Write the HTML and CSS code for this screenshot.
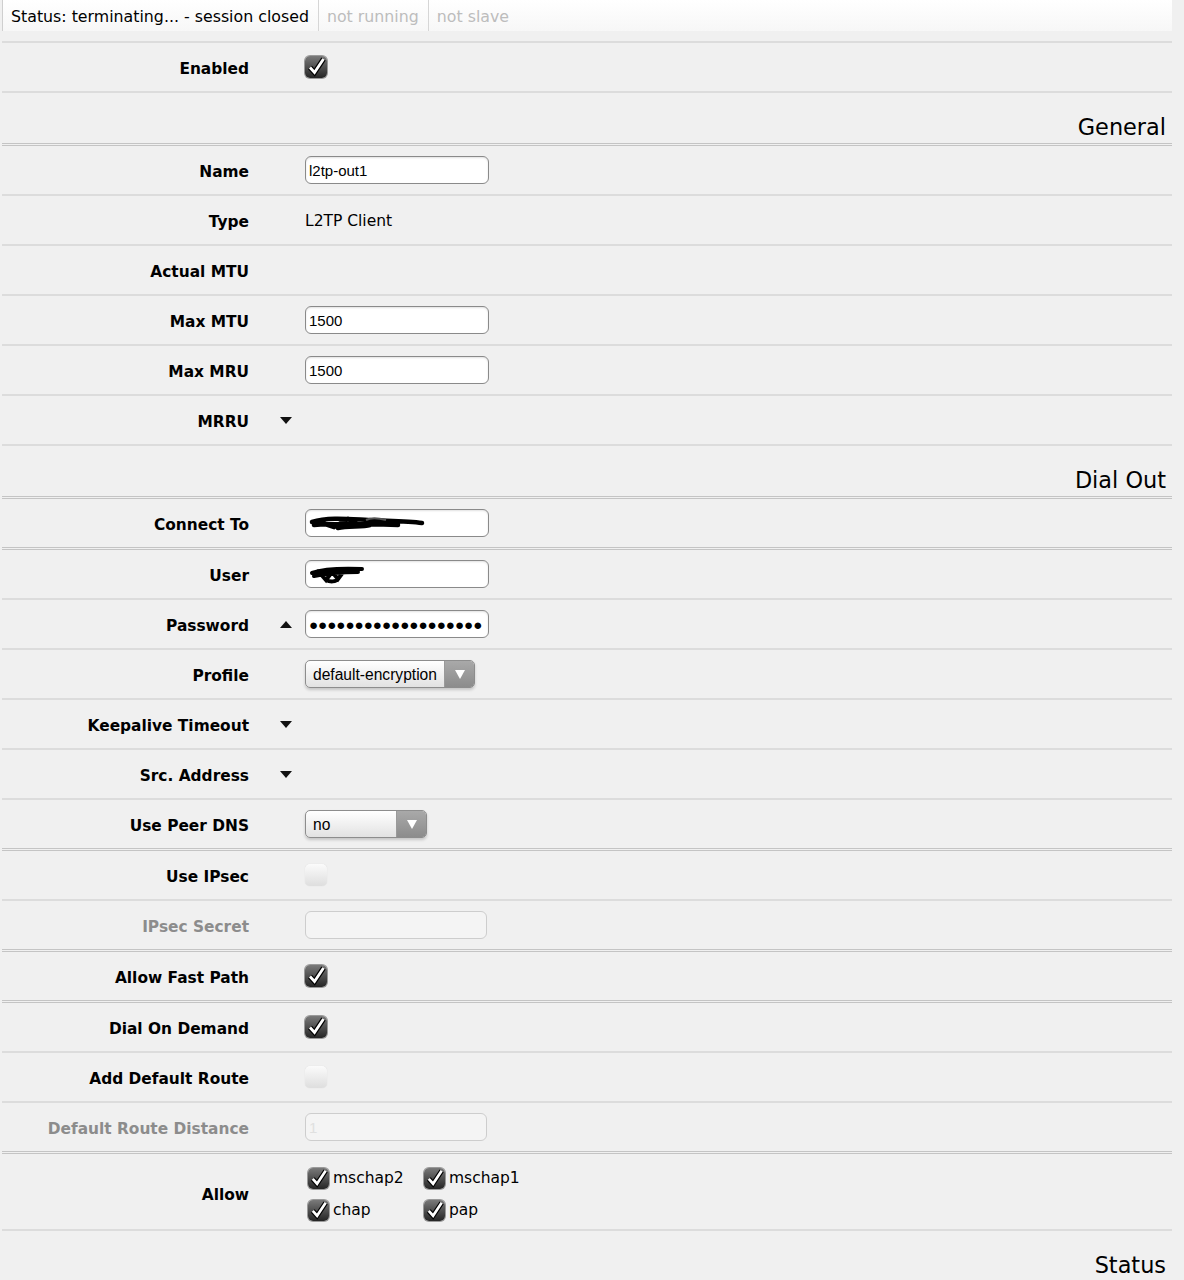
FILE: index.html
```html
<!DOCTYPE html>
<html lang="en">
<head>
  <meta charset="UTF-8" />
  <title>Interface &lt;l2tp-out1&gt;</title>
  <link rel="stylesheet" href="styles.css">
</head>
<body>
  <div class="page">

    <div class="status-bar">
      <div class="status-cell">Status: terminating... - session closed</div>
      <div class="status-cell off">not running</div>
      <div class="status-cell off">not slave</div>
    </div>
    <div class="spacer"></div>

    <div class="row">
      <div class="label">Enabled</div>
      <div class="toggle"></div>
      <div class="value">
        <span class="check on"><svg class="tick" viewBox="0 0 22 22"><path class="tick-edge" d="M5 11.5 L9.5 16.5 L18.5 3"/><path class="tick-mark" d="M5 11.5 L9.5 16.5 L18.5 3"/></svg></span>
      </div>
    </div>

    <div class="section">General</div>

    <div class="row">
      <div class="label">Name</div>
      <div class="toggle"></div>
      <div class="value"><input class="text" type="text" value="l2tp-out1"></div>
    </div>
    <div class="row">
      <div class="label">Type</div>
      <div class="toggle"></div>
      <div class="value plain">L2TP Client</div>
    </div>
    <div class="row">
      <div class="label">Actual MTU</div>
      <div class="toggle"></div>
      <div class="value"></div>
    </div>
    <div class="row">
      <div class="label">Max MTU</div>
      <div class="toggle"></div>
      <div class="value"><input class="text" type="text" value="1500"></div>
    </div>
    <div class="row">
      <div class="label">Max MRU</div>
      <div class="toggle"></div>
      <div class="value"><input class="text" type="text" value="1500"></div>
    </div>
    <div class="row">
      <div class="label">MRRU</div>
      <div class="toggle"><span class="arrow down"></span></div>
      <div class="value"></div>
    </div>

    <div class="section">Dial Out</div>

    <div class="row double">
      <div class="label">Connect To</div>
      <div class="toggle"></div>
      <div class="value">
        <div class="text redacted">
          <svg width="120" height="22" viewBox="0 0 120 22">
            <path d="M4 10 C20 5 40 7 60 8 C80 9 100 9 114 11 M6 13 C30 11 60 12 90 13 M8 9 L26 15 L40 7 L52 14 L70 10 M30 16 C40 14 55 15 62 13" stroke="#000" stroke-width="4.5" fill="none" stroke-linecap="round"/>
            <path d="M58 8 C62 6 70 6 78 8" stroke="#555" stroke-width="2" fill="none"/>
          </svg>
        </div>
      </div>
    </div>
    <div class="row">
      <div class="label">User</div>
      <div class="toggle"></div>
      <div class="value">
        <div class="text redacted">
          <svg width="60" height="24" viewBox="0 0 60 24">
            <path d="M4 11 C15 7 30 6 54 7 M6 14 C20 11 35 10 50 10 M10 9 L18 18 L24 10 L30 17 L36 9 M18 18 C22 20 28 20 30 17" stroke="#000" stroke-width="4" fill="none" stroke-linecap="round"/>
          </svg>
        </div>
      </div>
    </div>
    <div class="row">
      <div class="label">Password</div>
      <div class="toggle"><span class="arrow up"></span></div>
      <div class="value"><div class="text dots">&#9679;&#9679;&#9679;&#9679;&#9679;&#9679;&#9679;&#9679;&#9679;&#9679;&#9679;&#9679;&#9679;&#9679;&#9679;&#9679;&#9679;&#9679;&#9679;</div></div>
    </div>
    <div class="row">
      <div class="label">Profile</div>
      <div class="toggle"></div>
      <div class="value">
        <div class="select wide"><span class="select-text">default-encryption</span><span class="select-btn"></span></div>
      </div>
    </div>
    <div class="row">
      <div class="label">Keepalive Timeout</div>
      <div class="toggle"><span class="arrow down"></span></div>
      <div class="value"></div>
    </div>
    <div class="row">
      <div class="label">Src. Address</div>
      <div class="toggle"><span class="arrow down"></span></div>
      <div class="value"></div>
    </div>
    <div class="row double">
      <div class="label">Use Peer DNS</div>
      <div class="toggle"></div>
      <div class="value">
        <div class="select narrow"><span class="select-text">no</span><span class="select-btn"></span></div>
      </div>
    </div>
    <div class="row">
      <div class="label">Use IPsec</div>
      <div class="toggle"></div>
      <div class="value"><span class="check"></span></div>
    </div>
    <div class="row double">
      <div class="label disabled">IPsec Secret</div>
      <div class="toggle"></div>
      <div class="value"><input class="text off" type="text" value="" disabled></div>
    </div>
    <div class="row double">
      <div class="label">Allow Fast Path</div>
      <div class="toggle"></div>
      <div class="value">
        <span class="check on"><svg class="tick" viewBox="0 0 22 22"><path class="tick-edge" d="M5 11.5 L9.5 16.5 L18.5 3"/><path class="tick-mark" d="M5 11.5 L9.5 16.5 L18.5 3"/></svg></span>
      </div>
    </div>
    <div class="row">
      <div class="label">Dial On Demand</div>
      <div class="toggle"></div>
      <div class="value">
        <span class="check on"><svg class="tick" viewBox="0 0 22 22"><path class="tick-edge" d="M5 11.5 L9.5 16.5 L18.5 3"/><path class="tick-mark" d="M5 11.5 L9.5 16.5 L18.5 3"/></svg></span>
      </div>
    </div>
    <div class="row">
      <div class="label">Add Default Route</div>
      <div class="toggle"></div>
      <div class="value"><span class="check"></span></div>
    </div>
    <div class="row double">
      <div class="label disabled">Default Route Distance</div>
      <div class="toggle"></div>
      <div class="value"><input class="text off" type="text" value="1" disabled></div>
    </div>
    <div class="row tall">
      <div class="label">Allow</div>
      <div class="toggle"></div>
      <div class="value">
        <div class="allow-grid">
          <div class="allow-item"><span class="check on small"><svg class="tick" viewBox="0 0 22 22"><path class="tick-edge" d="M5 11.5 L9.5 16.5 L18.5 3"/><path class="tick-mark" d="M5 11.5 L9.5 16.5 L18.5 3"/></svg></span>mschap2</div>
          <div class="allow-item"><span class="check on small"><svg class="tick" viewBox="0 0 22 22"><path class="tick-edge" d="M5 11.5 L9.5 16.5 L18.5 3"/><path class="tick-mark" d="M5 11.5 L9.5 16.5 L18.5 3"/></svg></span>mschap1</div>
          <div class="allow-item"><span class="check on small"><svg class="tick" viewBox="0 0 22 22"><path class="tick-edge" d="M5 11.5 L9.5 16.5 L18.5 3"/><path class="tick-mark" d="M5 11.5 L9.5 16.5 L18.5 3"/></svg></span>chap</div>
          <div class="allow-item"><span class="check on small"><svg class="tick" viewBox="0 0 22 22"><path class="tick-edge" d="M5 11.5 L9.5 16.5 L18.5 3"/><path class="tick-mark" d="M5 11.5 L9.5 16.5 L18.5 3"/></svg></span>pap</div>
        </div>
      </div>
    </div>

    <div class="section last">Status</div>

  </div>
</body>
</html>
```

FILE: styles.css
```css
body {
  font-family: 'DejaVu Sans', Verdana, sans-serif;
  background-color: #f0f0f0;
  color: #000;
  margin: 0;
  padding: 0;
}

.page {
  width: 1170px;
  margin-left: 2px;
}

/* status strip at the top */
.status-bar {
  display: flex;
  height: 31px;
  background: linear-gradient(#ffffff, #f7f7f7);
  border-left: 1px solid #cfcfcf;
  font-size: 15.8px;
}

.status-cell {
  padding: 0 9px 0 8px;
  line-height: 33px;
  border-right: 1px solid #d6d6d6;
}

.status-cell.off {
  color: #bdbdbd;
}

.status-cell:last-child {
  border-right: none;
}

.spacer {
  height: 10px;
  border-bottom: 2px solid #dcdcdc;
}

/* form rows */
.row {
  display: flex;
  align-items: center;
  height: 48px;
  border-bottom: 2px solid #dcdcdc;
}

.row.double {
  border-bottom: 3px double #c4c4c4;
}

.row.tall {
  height: 75px;
}

.label {
  width: 247px;
  text-align: right;
  font-weight: bold;
  font-size: 15.4px;
  padding-top: 3px;
}

.row.tall .label {
  padding-top: 6px;
}

.label.disabled {
  color: #8c8c8c;
}

.toggle {
  width: 56px;
  display: flex;
  justify-content: flex-end;
  padding-right: 13px;
  box-sizing: border-box;
}

.value {
  flex: 1;
  display: flex;
  align-items: center;
}

.value.plain {
  font-size: 15.5px;
  padding-top: 2px;
}

.section {
  height: 50px;
  border-bottom: 3px double #c4c4c4;
  text-align: right;
  padding-right: 6px;
  font-size: 22.4px;
  line-height: 68px;
}

.section.last {
  border-bottom: none;
}

/* small expand / collapse arrows */
.arrow {
  width: 0;
  height: 0;
  border-left: 6px solid transparent;
  border-right: 6px solid transparent;
}

.arrow.down {
  border-top: 7px solid #111;
}

.arrow.up {
  border-bottom: 7px solid #111;
}

/* text fields */
.text {
  width: 184px;
  height: 28px;
  box-sizing: border-box;
  border: 1px solid #8a8a8a;
  border-radius: 6px;
  background: #fff;
  box-shadow: inset 0 1px 2px rgba(0,0,0,0.12);
  font-family: 'Liberation Sans', Arial, sans-serif;
  font-size: 15px;
  padding: 0 3px;
  color: #000;
  outline: none;
}

.text.off {
  width: 182px;
  border-color: #cdcdcd;
  background: #f4f4f4;
  box-shadow: none;
  color: #e0e0e0;
}

.redacted {
  display: flex;
  align-items: center;
  padding: 0 2px;
  overflow: hidden;
}

.dots {
  display: flex;
  align-items: center;
  font-size: 15.2px;
  letter-spacing: -0.05px;
  padding-left: 3px;
  white-space: nowrap;
  overflow: hidden;
}

/* drop-down selects */
.select {
  display: flex;
  height: 28px;
  box-sizing: border-box;
  border: 1px solid #8d8d8d;
  border-radius: 5px;
  background: linear-gradient(#ffffff, #e2e2e2);
  box-shadow: 0 2px 3px rgba(0,0,0,0.18);
  overflow: hidden;
  font-family: 'Liberation Sans', Arial, sans-serif;
  font-size: 15.6px;
}

.select.wide {
  width: 170px;
}

.select.narrow {
  width: 122px;
}

.select-text {
  flex: 1;
  padding-left: 7px;
  line-height: 28px;
}

.select-btn {
  width: 29px;
  background: linear-gradient(#a9a9a9, #8c8c8c);
  border-left: 1px solid #9a9a9a;
  display: flex;
  align-items: center;
  justify-content: center;
}

.select-btn::after {
  content: '';
  border-left: 5px solid transparent;
  border-right: 5px solid transparent;
  border-top: 9px solid #fff;
}

/* checkboxes */
.check {
  display: inline-block;
  position: relative;
  width: 22px;
  height: 22px;
  border-radius: 5px;
  background: linear-gradient(#fbfbfb, #dedede);
  box-shadow: 0 0 1px rgba(0,0,0,0.15);
  flex-shrink: 0;
}

.check.on {
  background: linear-gradient(#7a7a7a, #252525);
  box-shadow: 0 0 0 1px #9a9a9a;
}

.tick {
  position: absolute;
  left: 0;
  top: 0;
  width: 100%;
  height: 100%;
  overflow: visible;
}

.tick path {
  fill: none;
  stroke-linejoin: miter;
  stroke-linecap: butt;
}

.tick-edge {
  stroke: #000;
  stroke-width: 5.2;
}

.tick-mark {
  stroke: #fff;
  stroke-width: 2.8;
}

.check.small {
  width: 21px;
  height: 21px;
  margin-right: 4px;
}

.allow-grid {
  display: grid;
  grid-template-columns: 116px 116px;
  row-gap: 11px;
  padding-left: 3px;
  padding-top: 5px;
  font-size: 15.5px;
}

.allow-item {
  display: flex;
  align-items: center;
}
```
